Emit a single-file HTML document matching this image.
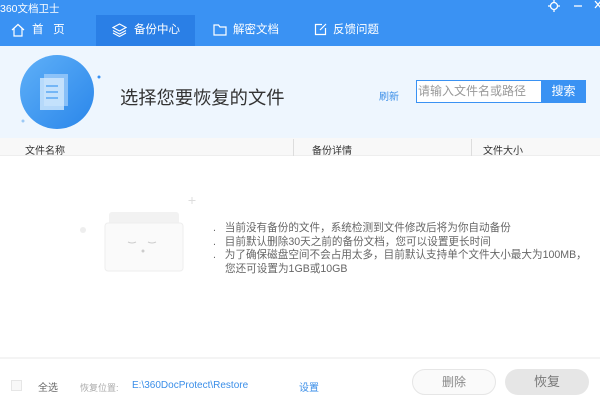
<!DOCTYPE html>
<html><head><meta charset="utf-8"><style>
*{margin:0;padding:0;box-sizing:border-box}
body{width:600px;height:400px;overflow:hidden;background:#fff;font-family:"Liberation Sans","Noto Sans CJK SC",sans-serif;position:relative;font-size:11px;color:#333}
.abs{position:absolute}
.top{left:0;top:0;width:600px;height:46px;background:#3a92f3}
.nav{top:15px;height:31px;line-height:31px;color:#fff;font-size:11.5px}
</style></head><body>
<div class="abs top"></div>
<div class="abs" style="left:0;top:1px;color:#fff;font-size:10.5px">360文档卫士</div>
<svg class="abs" style="left:546px;top:0" width="54" height="14" viewBox="0 0 54 14"><circle cx="8" cy="6" r="3.5" fill="none" stroke="#fff" stroke-width="1.3"/><g stroke="#fff" stroke-width="1.3"><line x1="8" y1="0" x2="8" y2="2"/><line x1="8" y1="10" x2="8" y2="12"/><line x1="2" y1="6" x2="4" y2="6"/><line x1="12" y1="6" x2="14" y2="6"/><line x1="28" y1="6" x2="36" y2="6"/><line x1="49" y1="1" x2="55" y2="8"/><line x1="49" y1="8" x2="55" y2="1"/></g></svg>
<div class="abs" style="left:96px;top:15px;width:99px;height:31px;background:#2a7fe6"></div>
<svg class="abs" style="left:11px;top:23px" width="14" height="14" viewBox="0 0 14 14"><path d="M1 7L7 1.5L13 7M3 5.5V13H11V5.5" fill="none" stroke="#fff" stroke-width="1.2"/></svg>
<div class="abs nav" style="left:32px">首&nbsp;&nbsp;&nbsp;页</div>
<svg class="abs" style="left:112px;top:23px" width="15" height="14" viewBox="0 0 15 14"><path d="M7.5 1L14 4.5L7.5 8L1 4.5Z M1 7.5L7.5 11L14 7.5 M1 10L7.5 13.5L14 10" fill="none" stroke="#fff" stroke-width="1.1"/></svg>
<div class="abs nav" style="left:134px">备份中心</div>
<svg class="abs" style="left:213px;top:24px" width="14" height="12" viewBox="0 0 14 12"><path d="M1 1H5.5L7 3H13V11H1Z" fill="none" stroke="#fff" stroke-width="1.2"/></svg>
<div class="abs nav" style="left:233px">解密文档</div>
<svg class="abs" style="left:314px;top:23px" width="13" height="13" viewBox="0 0 13 13"><path d="M8 1.5H1.5V11.5H11.5V5 M6 7L12 1" fill="none" stroke="#fff" stroke-width="1.2"/></svg>
<div class="abs nav" style="left:333px">反馈问题</div>

<div class="abs" style="left:0;top:46px;width:600px;height:92px;background:#eef6fe"></div>
<svg class="abs" style="left:15px;top:55px" width="90" height="85" viewBox="0 0 90 85">
<defs><linearGradient id="g" x1="0" y1="0" x2="1" y2="1"><stop offset="0" stop-color="#5fb0f8"/><stop offset="1" stop-color="#2a86ea"/></linearGradient></defs>
<circle cx="42" cy="37" r="37" fill="url(#g)"/>
<rect x="29" y="19" width="24" height="32" fill="#a8d2fb" opacity=".7"/>
<rect x="25" y="23" width="24" height="32" fill="#d2e8fd" opacity=".8"/>
<g stroke="#5aa8f4" stroke-width="1.5"><line x1="31" y1="31" x2="43" y2="31"/><line x1="31" y1="37" x2="43" y2="37"/><line x1="31" y1="43" x2="43" y2="43"/></g>
<circle cx="84" cy="22" r="1.5" fill="#3a92f3"/><circle cx="8" cy="66" r="1.5" fill="#9cc9f5"/>
</svg>
<div class="abs" style="left:120px;top:84px;font-size:18.3px;color:#333">选择您要恢复的文件</div>
<div class="abs" style="left:379px;top:88px;color:#3a8ee8;font-size:10px">刷新</div>
<div class="abs" style="left:416px;top:80px;width:126px;height:23px;border:1px solid #3a92f3;background:#fff;color:#999;font-size:12px;line-height:21px;padding-left:1px">请输入文件名或路径</div>
<div class="abs" style="left:541px;top:80px;width:45px;height:23px;background:#3a92f3;color:#fff;font-size:12px;line-height:23px;text-align:center">搜索</div>

<div class="abs" style="left:0;top:138px;width:600px;height:18px;background:#f8f8f8;border-bottom:1px solid #eee"></div>
<div class="abs" style="left:25px;top:142px;font-size:10px">文件名称</div>
<div class="abs" style="left:293px;top:139px;width:1px;height:17px;background:#ddd"></div>
<div class="abs" style="left:312px;top:142px;font-size:10px">备份详情</div>
<div class="abs" style="left:471px;top:139px;width:1px;height:17px;background:#ddd"></div>
<div class="abs" style="left:483px;top:142px;font-size:10px">文件大小</div>

<svg class="abs" style="left:80px;top:190px" width="120" height="90" viewBox="0 0 120 90">
<rect x="29" y="22" width="70" height="58" rx="3" fill="#f2f2f2"/>
<rect x="25" y="33" width="78" height="48" rx="3" fill="#fafafa" stroke="#eee"/>
<path d="M48 52q4 2 8 0M68 52q4 2 8 0" stroke="#ccc" fill="none"/>
<circle cx="63" cy="61" r="1.5" fill="#ccc"/>
<circle cx="3" cy="40" r="3" fill="#eee"/>
<path d="M112 7v7M108.5 10.5h7" stroke="#ddd"/>
</svg>
<div class="abs" style="left:213px;top:222px;font-size:10.6px;line-height:13.5px;color:#666">
<div>.&nbsp;&nbsp; 当前没有备份的文件，系统检测到文件修改后将为你自动备份</div>
<div>.&nbsp;&nbsp; 目前默认删除30天之前的备份文档，您可以设置更长时间</div>
<div style="white-space:nowrap">.&nbsp;&nbsp; 为了确保磁盘空间不会占用太多，目前默认支持单个文件大小最大为100MB，</div>
<div style="padding-left:12px">您还可设置为1GB或10GB</div>
</div>

<div class="abs" style="left:0;top:357px;width:600px;height:2px;background:#f4f4f4"></div>
<div class="abs" style="left:11px;top:380px;width:11px;height:11px;border:1px solid #e6e6e6;background:#f8f8f8"></div>
<div class="abs" style="left:38px;top:379px;font-size:10px;color:#666">全选</div>
<div class="abs" style="left:80px;top:381px;font-size:9px;color:#aaa">恢复位置:</div>
<div class="abs" style="left:132px;top:380px;font-size:10px;color:#3a8ee8">E:\360DocProtect\Restore</div>
<div class="abs" style="left:299px;top:379px;font-size:10px;color:#3a8ee8">设置</div>
<div class="abs" style="left:412px;top:369px;width:84px;height:26px;border:1px solid #e6e6e6;border-radius:13px;background:#fafafa;text-align:center;line-height:24px;font-size:12px;color:#888">删除</div>
<div class="abs" style="left:505px;top:369px;width:84px;height:26px;border-radius:13px;background:#e6e6e6;text-align:center;line-height:26px;font-size:13px;color:#777">恢复</div>
</body></html>
